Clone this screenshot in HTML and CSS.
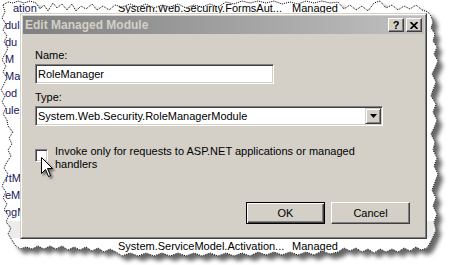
FILE: index.html
```html
<!DOCTYPE html>
<html lang="en">
<head>
    <meta charset="UTF-8">
    <title>Edit Managed Module</title>
    <link rel="stylesheet" href="styles.css">
</head>
<body>

    <div class="shot">
        <!-- torn paper edge + drop shadow -->
        <svg class="paper" width="453" height="265">
            <defs>
                <polygon id="tear-shape" points="3,5 8,2 13,3 18,1 24,3 30,1 36,3 40,9 44,5 48,11 53,3 57,8 62,4 67,10 72,4 76,11 81,6 86,9 92,4 97,10 103,6 109,10 115,5 122,7 130,4 138,7 146,4 154,8 162,5 170,7 178,4 186,8 194,5 202,7 210,4 218,7 226,2 234,4 242,1 250,3 258,1 266,3 274,1 282,4 290,2 298,4 306,1 314,3 322,1 330,3 338,2 344,9 350,5 356,10 362,6 368,11 374,3 380,1 386,8 392,5 398,10 404,6 410,9 416,5 422,10 428,12 431,16 433,22 431,28 435,34 433,41 437,47 434,54 438,61 435,68 432,74 436,82 433,90 431,96 436,104 433,112 437,120 434,128 431,134 435,142 433,150 437,158 434,166 438,174 435,182 432,190 436,198 433,206 437,214 434,222 436,230 433,237 430,243 427,248 421,250 416,247 410,251 404,248 398,252 392,249 386,252 380,249 374,253 368,249 362,252 356,248 350,251 344,248 338,252 330,254 322,251 314,255 306,252 298,255 290,252 282,255 274,252 266,255 258,252 250,256 242,253 234,256 226,253 218,256 210,253 202,256 194,253 186,256 178,253 170,256 162,253 154,256 146,253 138,256 130,253 122,256 116,252 110,249 104,252 98,248 92,251 86,247 80,250 74,247 68,250 62,246 56,249 50,246 44,249 38,246 32,249 26,247 20,249 15,245 12,240 8,234 11,228 6,222 9,216 4,210 7,204 3,198 6,192 2,186 5,180 8,174 4,168 7,162 11,156 8,150 12,144 9,138 13,132 8,126 7,120 3,114 6,108 2,102 5,96 1,90 4,84 7,78 3,72 6,66 2,60 5,54 8,48 4,42 7,36 3,30 6,24 2,18 5,12"/>
                <clipPath id="tear"><use href="#tear-shape"/></clipPath>
                <filter id="drop" x="-10%" y="-10%" width="130%" height="130%">
                    <feDropShadow dx="5" dy="5" stdDeviation="2" flood-color="#000" flood-opacity="0.6"/>
                </filter>
                <filter id="cursor-drop" x="-50%" y="-50%" width="200%" height="200%">
                    <feDropShadow dx="2" dy="2" stdDeviation="1.2" flood-color="#000" flood-opacity="0.5"/>
                </filter>
            </defs>
            <use href="#tear-shape" fill="#fff" filter="url(#drop)"/>
        </svg>

        <!-- module list behind the dialog (only the parts that show) -->
        <div class="backdrop">
            <div class="row row-first"><span class="cell-name">ation</span><span class="cell-type">System.Web.Security.FormsAut...</span><span class="cell-kind">Managed</span></div>
            <div class="row"><span class="cell-name">dule</span></div>
            <div class="row"><span class="cell-name">du</span></div>
            <div class="row"><span class="cell-name">M</span></div>
            <div class="row"><span class="cell-name">Map</span></div>
            <div class="row"><span class="cell-name">od</span></div>
            <div class="row"><span class="cell-name">ule</span></div>
            <div class="row"></div>
            <div class="row"></div>
            <div class="row"></div>
            <div class="row"><span class="cell-name">rtM</span></div>
            <div class="row"><span class="cell-name">eMo</span></div>
            <div class="row"><span class="cell-name">ngM</span></div>
            <div class="band"></div>
            <div class="row"><span class="cell-name"></span><span class="cell-type">System.ServiceModel.Activation...</span><span class="cell-kind">Managed</span></div>
        </div>

        <svg class="tear-line" width="453" height="265"><use href="#tear-shape"/></svg>

        <!-- Edit Managed Module dialog -->
        <div class="dialog">
            <div class="frame">
                <div class="titlebar">
                    <span class="title">Edit Managed Module</span>
                    <span class="cap-btn cap-help">?</span>
                    <span class="cap-btn">
                        <svg width="8" height="7" viewBox="0 0 8 7"><path d="M0.5 0 L7.5 7 M7.5 0 L0.5 7" stroke="#000" stroke-width="1.7"/></svg>
                    </span>
                </div>

                <div class="body">
                    <div class="label">Name:</div>
                    <div class="edit">RoleManager</div>

                    <div class="label label-type">Type:</div>
                    <div class="combo">
                        <span class="combo-text">System.Web.Security.RoleManagerModule</span>
                        <span class="combo-btn">
                            <svg width="7" height="4" viewBox="0 0 7 4"><path d="M0 0 H7 L3.5 4 Z" fill="#000"/></svg>
                        </span>
                    </div>

                    <div class="check-row">
                        <span class="checkbox"></span>
                        <span class="check-label">Invoke only for requests to ASP.NET applications or managed handlers</span>
                    </div>

                    <div class="actions">
                        <span class="btn btn-default">OK</span>
                        <span class="btn">Cancel</span>
                    </div>
                </div>
            </div>
        </div>

        <!-- mouse pointer over the checkbox -->
        <svg class="cursor" width="20" height="26" viewBox="0 0 20 26">
            <path d="M1.5 1.5 L1.5 17.5 L5.5 13.5 L8.5 20.5 L10.5 19.5 L7.5 12.5 L12.5 12.5 Z" fill="#fff" stroke="#000" stroke-width="1" stroke-linejoin="miter" filter="url(#cursor-drop)"/>
        </svg>
    </div>

</body>
</html>
```

FILE: styles.css
```css
body {
    margin: 0;
    background-color: #fff;
    font-family: "Liberation Sans", Arial, sans-serif;
    font-size: 11px;
    color: #000;
}

.shot {
    position: relative;
    width: 453px;
    height: 265px;
    overflow: hidden;
    box-sizing: border-box;
    padding: 13px 0 0 20px;
}

.paper,
.tear-line {
    position: absolute;
    left: 0;
    top: 0;
}

.tear-line use {
    fill: none;
    stroke: #000;
    stroke-width: 1;
    stroke-dasharray: 1 1;
}

/* list behind the dialog */
.backdrop {
    position: absolute;
    left: 0;
    top: 0;
    width: 453px;
    height: 265px;
    clip-path: url(#tear);
}

.row {
    display: grid;
    grid-template-columns: 115px 176px 1fr;
    height: 17px;
    line-height: 17px;
    white-space: nowrap;
    overflow: hidden;
}

.cell-name {
    padding-left: 5px;
    color: #16165a;
    overflow: hidden;
}

.row-first .cell-name {
    padding-left: 13px;
}

.cell-type {
    padding-left: 3px;
    overflow: hidden;
}

.cell-kind {
    padding-left: 1px;
}

.band {
    height: 17px;
    background-color: #ececec;
}

/* dialog */
.dialog {
    position: relative;
    z-index: 1;
    width: 407px;
    height: 226px;
    box-sizing: border-box;
    background-color: #d4d0c8;
    border: 1px solid;
    border-color: #d4d0c8 #404040 #404040 #d4d0c8;
}

.frame {
    height: 100%;
    box-sizing: border-box;
    border: 1px solid;
    border-color: #fff #808080 #808080 #fff;
    padding: 1px;
    display: flex;
    flex-direction: column;
}

.titlebar {
    height: 18px;
    display: flex;
    align-items: center;
    padding: 0 2px;
    background: linear-gradient(to right, #808080, #c0c0c0);
}

.title {
    flex: 1;
    font-weight: bold;
    font-size: 12px;
    color: #d4d0c8;
}

.cap-btn {
    width: 16px;
    height: 14px;
    box-sizing: border-box;
    margin-left: 2px;
    display: flex;
    align-items: center;
    justify-content: center;
    background-color: #d4d0c8;
    border: 1px solid;
    border-color: #fff #404040 #404040 #fff;
    box-shadow: inset -1px -1px #808080;
}

.cap-help {
    font-weight: bold;
    font-size: 11px;
    line-height: 12px;
    margin-left: 0;
}

.body {
    flex: 1;
    display: flex;
    flex-direction: column;
    padding: 15px 14px 12px 12px;
}

.label {
    line-height: 13px;
    margin-bottom: 2px;
}

.label-type {
    margin-top: 7px;
}

.edit,
.combo {
    height: 20px;
    box-sizing: border-box;
    background-color: #fff;
    border: 1px solid;
    border-color: #808080 #fff #fff #808080;
    box-shadow: inset 1px 1px #404040, inset -1px -1px #d4d0c8;
}

.edit {
    width: 239px;
    padding-left: 2px;
    line-height: 18px;
}

.combo {
    width: 348px;
    padding: 1px;
    display: flex;
}

.combo-text {
    flex: 1;
    padding-left: 1px;
    line-height: 16px;
}

.combo-btn {
    width: 16px;
    height: 16px;
    box-sizing: border-box;
    display: flex;
    align-items: center;
    justify-content: center;
    background-color: #d4d0c8;
    border: 1px solid;
    border-color: #d4d0c8 #404040 #404040 #d4d0c8;
    box-shadow: inset 1px 1px #fff, inset -1px -1px #808080;
}

.check-row {
    display: flex;
    margin-top: 19px;
}

.checkbox {
    flex: none;
    width: 13px;
    height: 13px;
    box-sizing: border-box;
    margin: 4px 7px 0 0;
    background-color: #fff;
    border: 1px solid;
    border-color: #808080 #fff #fff #808080;
    box-shadow: inset 1px 1px #404040, inset -1px -1px #d4d0c8;
}

.check-label {
    width: 310px;
    line-height: 13px;
}

.actions {
    margin-top: auto;
    display: flex;
    justify-content: flex-end;
    gap: 6px;
}

.btn {
    width: 79px;
    height: 22px;
    box-sizing: border-box;
    display: flex;
    align-items: center;
    justify-content: center;
    border: 1px solid;
    border-color: #fff #404040 #404040 #fff;
    box-shadow: inset -1px -1px #808080;
}

.btn-default {
    border-color: #000;
    box-shadow: inset 1px 1px #fff, inset -1px -1px #404040, inset -2px -2px #808080;
}

.cursor {
    position: absolute;
    z-index: 2;
    left: 40px;
    top: 156px;
}
```
